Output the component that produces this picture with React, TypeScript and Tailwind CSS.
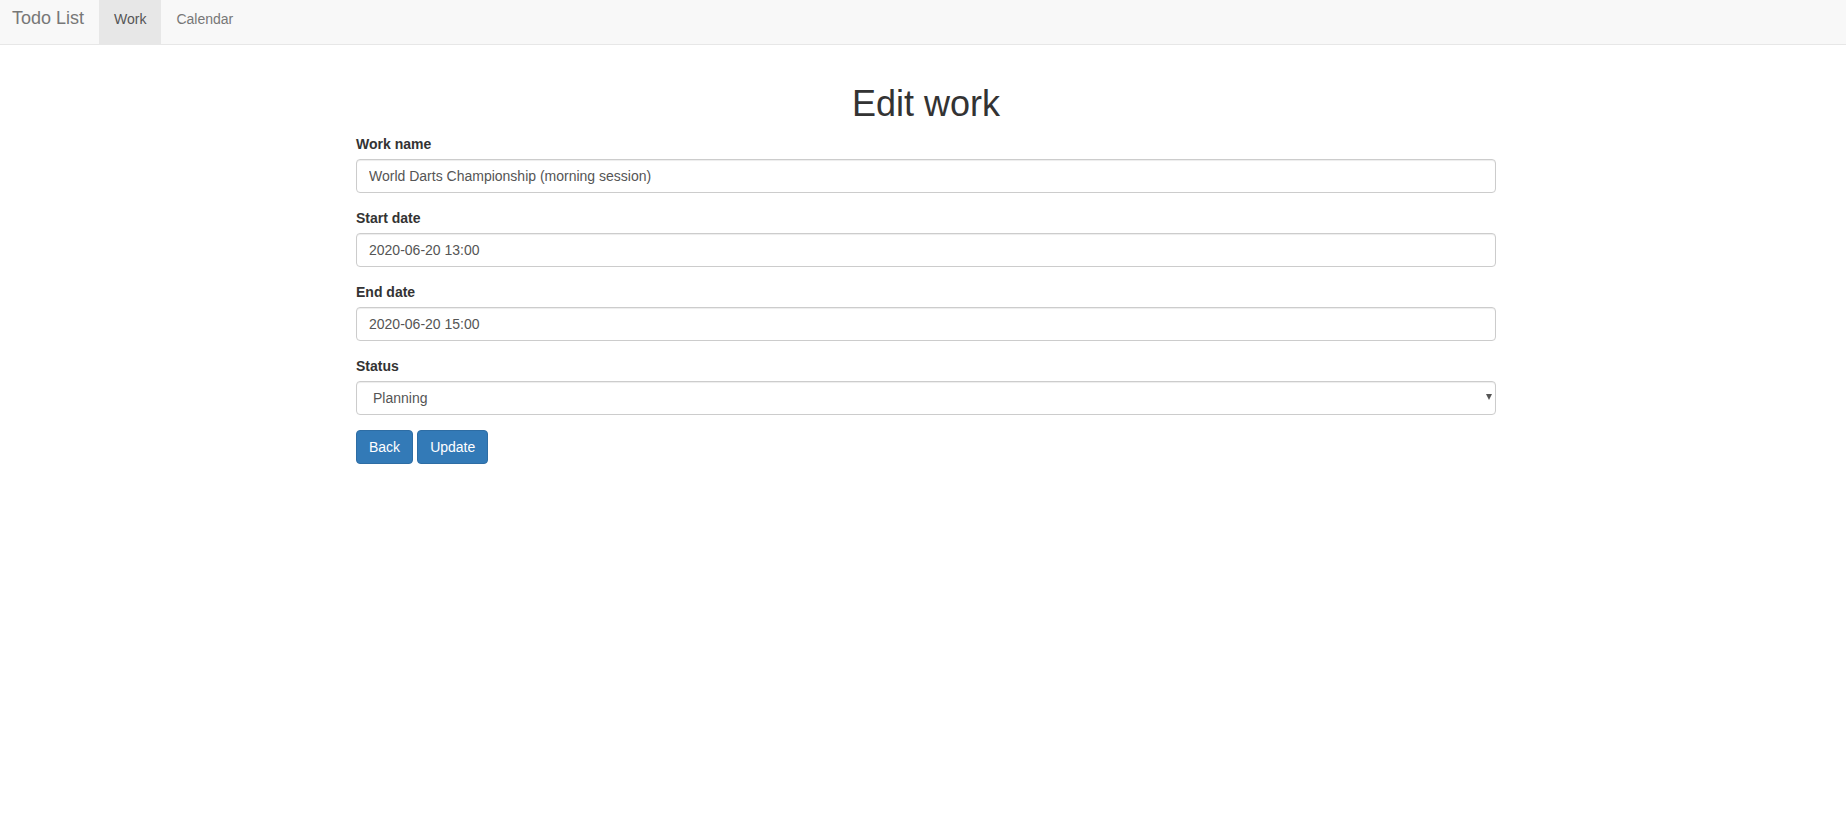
import React from "react";

export default function App() {
  const inputCls =
    "block w-full h-[34px] px-[12px] py-[6px] text-[14px] leading-[20px] text-[#555] bg-white border border-[#ccc] rounded-[4px] shadow-[inset_0_1px_1px_rgba(0,0,0,0.075)] outline-none";
  const labelCls = "block text-[14px] leading-[20px] font-bold text-[#333] mb-[5px]";
  return (
    <div
      className="min-h-screen bg-white text-[#333] text-[14px]"
      style={{ fontFamily: '"Liberation Sans", Arial, Helvetica, sans-serif' }}
    >
      <nav className="h-[45px] bg-[#f8f8f8] border-b border-[#e7e7e7] flex">
        <a className="h-full pl-[12px] pr-[15px] pt-[8px] text-[18px] leading-[20px] text-[#777]">Todo List</a>
        <a className="h-full px-[15px] pt-[9px] text-[14px] leading-[20px] text-[#555] bg-[#e7e7e7]">Work</a>
        <a className="h-full px-[15px] pt-[9px] text-[14px] leading-[20px] text-[#777]">Calendar</a>
      </nav>
      <div className="ml-[356px] w-[1140px]">
        <h1 className="mt-[39px] mb-[10px] text-center text-[36px] leading-[1.1] font-normal text-[#333]">
          Edit work
        </h1>
        <div className="mb-[15px]">
          <label className={labelCls}>Work name</label>
          <input className={inputCls} defaultValue="World Darts Championship (morning session)" />
        </div>
        <div className="mb-[15px]">
          <label className={labelCls}>Start date</label>
          <input className={inputCls} defaultValue="2020-06-20 13:00" />
        </div>
        <div className="mb-[15px]">
          <label className={labelCls}>End date</label>
          <input className={inputCls} defaultValue="2020-06-20 15:00" />
        </div>
        <div className="mb-[15px]">
          <label className={labelCls}>Status</label>
          <div className="relative">
            <select className={inputCls + " appearance-none pl-[16px]"} defaultValue="Planning">
              <option>Planning</option>
              <option>Doing</option>
              <option>Complete</option>
            </select>
            <span className="pointer-events-none absolute right-[4px] top-[13px] w-0 h-0 border-l-[3.5px] border-r-[3.5px] border-t-[6px] border-l-transparent border-r-transparent border-t-[#555]" />
          </div>
        </div>
        <div className="flex gap-[4px]">
          <button className="h-[34px] px-[12px] text-[14px] leading-[20px] text-white bg-[#337ab7] border border-[#2e6da4] rounded-[4px]">
            Back
          </button>
          <button className="h-[34px] px-[12px] text-[14px] leading-[20px] text-white bg-[#337ab7] border border-[#2e6da4] rounded-[4px]">
            Update
          </button>
        </div>
      </div>
    </div>
  );
}
